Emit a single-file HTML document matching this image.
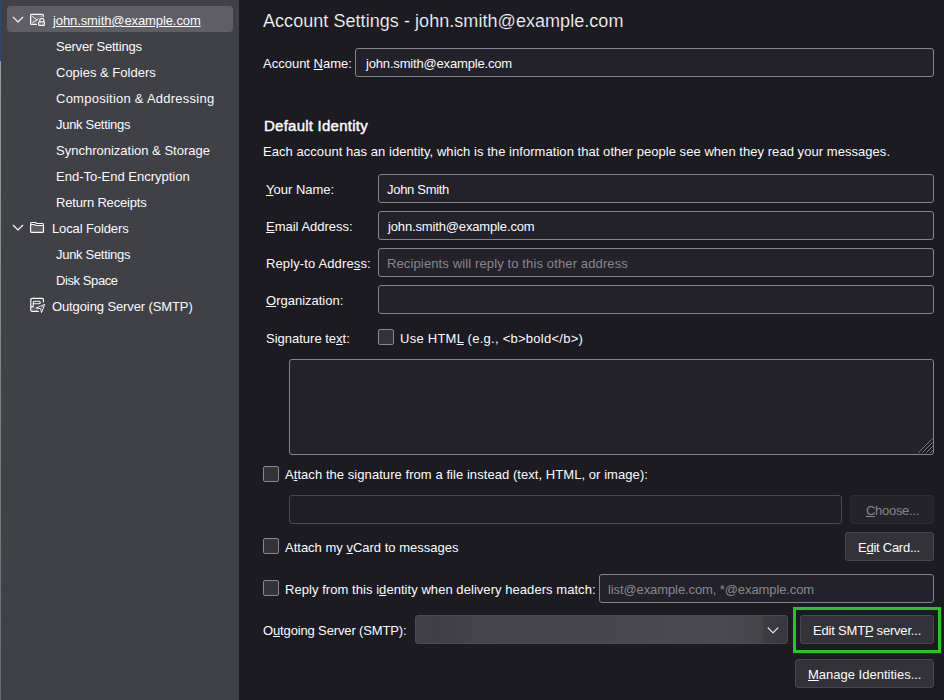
<!DOCTYPE html>
<html><head><meta charset="utf-8">
<style>
html,body{margin:0;padding:0;}
body{width:944px;height:700px;overflow:hidden;position:relative;background:#1c1b22;font-family:"Liberation Sans",sans-serif;font-size:13px;color:#fbfbfe;}
.a{position:absolute;}
.t{position:absolute;white-space:nowrap;line-height:15px;font-size:13px;}
.u{text-decoration:underline;text-underline-offset:1px;}
#side{position:absolute;left:0;top:0;width:239px;height:700px;background:#404047;}
.sel{position:absolute;left:7px;top:6px;width:226px;height:26px;border-radius:4px;background:#5e5e64;}
.inp{position:absolute;box-sizing:border-box;border:1px solid #838389;border-radius:3px;background:#23222b;}
.cb{position:absolute;box-sizing:border-box;width:16px;height:16px;border:1px solid #88888c;border-radius:2px;background:#333238;}
.btn{position:absolute;box-sizing:border-box;border:1px solid #48474e;border-radius:3px;background:#333238;}
.ph{color:#88878d;}
</style></head><body>
<div id="side">
  <div class="a" style="left:0;top:0;width:1px;height:61px;background:#2c4a78"></div>
  <div class="a" style="left:0;top:61px;width:1px;height:639px;background:linear-gradient(#9a9a9a,#6a6a6e)"></div>
  <div class="sel"></div>
  <!-- chevrons -->
  <svg class="a" style="left:12px;top:15px" width="12" height="9" viewBox="0 0 12 9"><path d="M1 2 L6 7 L11 2" fill="none" stroke="#fbfbfe" stroke-width="1.2"/></svg>
  <svg class="a" style="left:12px;top:223px" width="12" height="9" viewBox="0 0 12 9"><path d="M1 2 L6 7 L11 2" fill="none" stroke="#fbfbfe" stroke-width="1.2"/></svg>
  <!-- account icon -->
  <svg class="a" style="left:28px;top:12px" width="20" height="16" viewBox="28 12 20 16">
    <path d="M36.9 24.4 H31.6 a1 1 0 0 1 -1 -1 V15.4 a1 1 0 0 1 1 -1 H42.4 a1 1 0 0 1 1 1 V17.7" fill="rgba(255,255,255,0.13)" stroke="#fbfbfe" stroke-width="1.2"/>
    <path d="M32.3 16.3 L37.1 20 L32.3 22.6 M37.1 20 L41.6 16.3" fill="none" stroke="#fbfbfe" stroke-width="0.9"/>
    <path d="M39.8 21.8 V20.3 a2 2 0 0 1 4 0 V21.8" fill="none" stroke="#5e5e64" stroke-width="3.2"/>
    <rect x="38.6" y="21.9" width="5.8" height="3.4" rx="0.9" fill="#5e5e64" stroke="#5e5e64" stroke-width="3"/>
    <path d="M39.8 21.8 V20.3 a2 2 0 0 1 4 0 V21.8" fill="none" stroke="#fbfbfe" stroke-width="1.25"/>
    <rect x="38.6" y="21.9" width="5.8" height="3.4" rx="0.9" fill="#737378" stroke="#fbfbfe" stroke-width="1.2"/>
  </svg>
  <!-- folder icon -->
  <svg class="a" style="left:28px;top:218px" width="20" height="18" viewBox="28 218 20 18">
    <path d="M30.6 224.5 h3.4 l2.5 1.1 h7 v5.9 a1 1 0 0 1 -1 1 h-10.9 a1 1 0 0 1 -1 -1 z" fill="rgba(255,255,255,0.16)" stroke="none" transform="translate(0 0)"/>
    <path d="M30.6 223.5 a1 1 0 0 1 1 -1 h4 l1.3 1 h5.6 a1 1 0 0 1 1 1 v6.9 a1 1 0 0 1 -1 1 h-10.9 a1 1 0 0 1 -1 -1 z" fill="none" stroke="#fbfbfe" stroke-width="1.15"/>
    <path d="M30.6 224.5 h3.4 l2.2 1 h6.9" fill="none" stroke="#fbfbfe" stroke-width="1.1"/>
  </svg>
  <!-- smtp icon -->
  <svg class="a" style="left:28px;top:294px" width="20" height="22" viewBox="28 294 20 22">
    <path d="M33 306.6 h5 v4.7 h-6.3 v-4.7 z" fill="rgba(255,255,255,0.15)"/>
    <path d="M43.4 302.5 V299.6 a1.2 1.2 0 0 0 -1.2 -1.2 H32 a1.2 1.2 0 0 0 -1.2 1.2 V310.1 a1.2 1.2 0 0 0 1.2 1.2 H38.8" fill="none" stroke="#fbfbfe" stroke-width="1.2"/>
    <rect x="33.2" y="301.3" width="7" height="2.4" rx="1" fill="none" stroke="#fbfbfe" stroke-width="1.1"/>
    <path d="M33.2 303.5 V306.6 H30.8" fill="none" stroke="#fbfbfe" stroke-width="1.1"/>
    <path d="M44.7 304.4 L36.3 308 L40.7 308.7 L41.5 312.6 Z" fill="#2a2a30" stroke="#fbfbfe" stroke-width="1" stroke-linejoin="round"/><path d="M40.7 308.7 L43.2 306" stroke="#fbfbfe" stroke-width="0.7"/>
  </svg>
  <div class="t u" style="left:53px;top:13px;letter-spacing:-0.095px">john.smith@example.com</div>
  <div class="t" style="left:56px;top:39px;letter-spacing:-0.207px">Server Settings</div>
  <div class="t" style="left:56px;top:65px">Copies &amp; Folders</div>
  <div class="t" style="left:56px;top:91px;letter-spacing:0.248px">Composition &amp; Addressing</div>
  <div class="t" style="left:56px;top:117px;letter-spacing:-0.300px">Junk Settings</div>
  <div class="t" style="left:56px;top:143px">Synchronization &amp; Storage</div>
  <div class="t" style="left:56px;top:169px">End-To-End Encryption</div>
  <div class="t" style="left:56px;top:195px;letter-spacing:-0.179px">Return Receipts</div>
  <div class="t" style="left:52px;top:221px;letter-spacing:-0.117px">Local Folders</div>
  <div class="t" style="left:56px;top:247px;letter-spacing:-0.300px">Junk Settings</div>
  <div class="t" style="left:56px;top:273px;letter-spacing:-0.411px">Disk Space</div>
  <div class="t" style="left:52px;top:299px;letter-spacing:-0.110px">Outgoing Server (SMTP)</div>
</div>

<div class="t" style="left:263px;top:11px;font-size:18px;line-height:20px;color:#fbfbfe;letter-spacing:0.050px;-webkit-text-stroke:0.2px #1c1b22">Account Settings - john.smith@example.com</div>

<div class="t" style="left:263px;top:56px">Account <span class="u">N</span>ame:</div>
<div class="inp" style="left:355px;top:48px;width:579px;height:29px"></div>
<div class="t" style="left:366px;top:56px;letter-spacing:-0.171px">john.smith@example.com</div>

<div class="t" style="left:264px;top:117px;font-size:15px;line-height:17px;-webkit-text-stroke:0.45px #fbfbfe;letter-spacing:0.24px">Default Identity</div>
<div class="t" style="left:263px;top:144px;letter-spacing:0.048px">Each account has an identity, which is the information that other people see when they read your messages.</div>

<div class="t" style="left:266px;top:182px"><span class="u">Y</span>our Name:</div>
<div class="inp" style="left:378px;top:174px;width:556px;height:29px"></div>
<div class="t" style="left:387px;top:182px;letter-spacing:-0.300px">John Smith</div>

<div class="t" style="left:266px;top:219px"><span class="u">E</span>mail Address:</div>
<div class="inp" style="left:378px;top:211px;width:556px;height:29px"></div>
<div class="t" style="left:388px;top:219px;letter-spacing:-0.148px">john.smith@example.com</div>

<div class="t" style="left:266px;top:256px;letter-spacing:0.125px">Reply-to Addre<span class="u">s</span>s:</div>
<div class="inp" style="left:378px;top:248px;width:556px;height:29px"></div>
<div class="t ph" style="left:387px;top:256px;letter-spacing:0.126px">Recipients will reply to this other address</div>

<div class="t" style="left:266px;top:293px"><span class="u">O</span>rganization:</div>
<div class="inp" style="left:378px;top:285px;width:556px;height:29px"></div>

<div class="t" style="left:266px;top:331px">Signature te<span class="u">x</span>t:</div>
<div class="cb" style="left:378px;top:329px"></div>
<div class="t" style="left:400px;top:331px;letter-spacing:0.259px">Use HTM<span class="u">L</span> (e.g., &lt;b&gt;bold&lt;/b&gt;)</div>

<div class="inp" style="left:289px;top:359px;width:645px;height:96px"></div>
<svg class="a" style="left:916px;top:436px" width="18" height="18" viewBox="916 436 18 18"><path d="M933 437.5 V453 H917.5 Z" fill="#1d1c23"/><path d="M932.6 438.4 L918.4 452.6 M932.6 442.4 L922.4 452.6 M932.6 446.4 L926.4 452.6 M932.6 450.4 L930.4 452.6" stroke="#8a8a90" stroke-width="0.9"/></svg>

<div class="cb" style="left:263px;top:466px"></div>
<div class="t" style="left:285px;top:467px;letter-spacing:0.060px">A<span class="u">t</span>tach the signature from a file instead (text, HTML, or image):</div>

<div class="inp" style="left:289px;top:495px;width:553px;height:29px;border-color:#4a4951;background:#1f1e25"></div>
<div class="btn" style="left:850px;top:495px;width:84px;height:29px;background:#24232a;border-color:#2c2b32"></div>
<div class="t" style="left:866px;top:503px;color:#85848c;letter-spacing:-0.300px"><span class="u">C</span>hoose...</div>

<div class="cb" style="left:263px;top:538px"></div>
<div class="t" style="left:285px;top:540px">Attach my <span class="u">v</span>Card to messages</div>
<div class="btn" style="left:845px;top:532px;width:89px;height:29px"></div>
<div class="t" style="left:858px;top:540px;letter-spacing:-0.255px">E<span class="u">d</span>it Card...</div>

<div class="cb" style="left:263px;top:580px"></div>
<div class="t" style="left:285px;top:582px;letter-spacing:0.052px">Reply from this i<span class="u">d</span>entity when delivery headers match:</div>
<div class="inp" style="left:599px;top:574px;width:335px;height:29px"></div>
<div class="t ph" style="left:608px;top:582px;letter-spacing:-0.100px">list@example.com, *@example.com</div>

<div class="t" style="left:263px;top:623px;letter-spacing:-0.141px">O<span class="u">u</span>tgoing Server (SMTP):</div>
<div class="a" style="left:415px;top:615px;width:373px;height:29px;box-sizing:border-box;border:1px solid #4c4b52;border-radius:3px;background:linear-gradient(90deg,#424147 0%,#3f3e44 5%,#444349 16%,#47464c 50%,#4a494f 80%,#454449 93.3%,#3d3c42 93.7%,#38373d 100%)"></div>
<svg class="a" style="left:766px;top:624px" width="14" height="12" viewBox="766 624 14 12"><path d="M767.8 627.6 L773 632.8 L778.2 627.6" fill="none" stroke="#fbfbfe" stroke-width="1.15"/></svg>

<div class="a" style="left:793px;top:607px;width:148px;height:46px;box-sizing:border-box;border:3px solid #23c823"></div>
<div class="btn" style="left:800px;top:615px;width:134px;height:29px"></div>
<div class="t" style="left:813px;top:623px;letter-spacing:-0.194px">Edit SMT<span class="u">P</span> server...</div>

<div class="btn" style="left:795px;top:659px;width:139px;height:29px"></div>
<div class="t" style="left:808px;top:667px"><span class="u">M</span>anage Identities...</div>
</body></html>
